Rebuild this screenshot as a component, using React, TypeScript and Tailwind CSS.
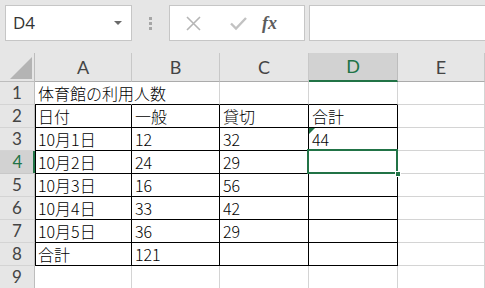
import React from "react";

const COLS = ["A", "B", "C", "D", "E"];

const DATA: string[][] = [
  ["体育館の利用人数", "", "", "", ""],
  ["日付", "一般", "貸切", "合計", ""],
  ["10月1日", "12", "32", "44", ""],
  ["10月2日", "24", "29", "", ""],
  ["10月3日", "16", "56", "", ""],
  ["10月4日", "33", "42", "", ""],
  ["10月5日", "36", "29", "", ""],
  ["合計", "121", "", "", ""],
  ["", "", "", "", ""],
];

const cellFont = { fontFamily: '"Noto Sans CJK JP", "Noto Sans", sans-serif' };
const uiFont = { fontFamily: 'Lato, "Open Sans", "Liberation Sans", sans-serif' };

const TopBar = () => (
  <div className="h-[53px] bg-[#e6e6e6] flex items-start pt-[5px] pl-[5px]">
    <div
      className="w-[127px] h-[36px] bg-white border border-[#c6c6c6] flex items-center justify-between pl-[7px] pr-[9px] text-[17px] text-[#333]"
      style={{ fontFamily: '"Open Sans", "Liberation Sans", sans-serif' }}
    >
      <span>D4</span>
      <span className="w-0 h-0 border-l-[4px] border-r-[4px] border-t-[4px] border-l-transparent border-r-transparent border-t-[#6a6a6a]" />
    </div>
    <div className="w-[37px] h-[36px] flex flex-col items-center justify-center gap-[2px]">
      <span className="w-[3px] h-[3px] bg-[#a6a6a6]" />
      <span className="w-[3px] h-[3px] bg-[#a6a6a6]" />
      <span className="w-[3px] h-[3px] bg-[#a6a6a6]" />
    </div>
    <div className="w-[136px] h-[36px] bg-white border border-[#c6c6c6] flex items-center">
      <svg width="44" height="34" viewBox="0 0 44 34" className="ml-[2px]">
        <path d="M15 11 L28 24 M28 11 L15 24" stroke="#b5b5b5" strokeWidth="1.6" fill="none" />
      </svg>
      <svg width="44" height="34" viewBox="0 0 44 34">
        <path d="M15 17.5 L20 22.5 L30 12" stroke="#c2c2c2" strokeWidth="2.4" fill="none" />
      </svg>
      <span
        className="ml-[2px] text-[18px] italic font-bold text-[#5c5c5c]"
        style={{ fontFamily: '"Liberation Serif", "DejaVu Serif", serif' }}
      >
        fx
      </span>
    </div>
    <div className="ml-[4px] flex-1 h-[36px] bg-white border border-r-0 border-[#c6c6c6]" />
  </div>
);

const Cell = ({ r, c, text }: { r: number; c: number; text: string }) => {
  const inTable = r >= 1 && r <= 7 && c <= 3;
  const bottomBlack = r <= 7 && c <= 3;
  const leftBlack = inTable && c === 0;
  let cls =
    "relative flex items-end pl-[3px] pb-[1px] text-[16px] leading-[20px] font-light text-black whitespace-nowrap border-r border-b ";
  cls += inTable ? "border-r-black " : r === 0 && c === 0 ? "border-r-transparent " : "border-r-[#d4d4d4] ";
  cls += bottomBlack ? "border-b-black " : "border-b-[#d4d4d4] ";
  if (leftBlack) cls += "shadow-[inset_1px_0_0_#000] ";
  if (r === 0 && c === 0) cls += "z-10 ";
  return (
    <div className={cls} style={cellFont}>
      {r === 2 && c === 3 && (
        <span className="absolute left-0 top-0 w-0 h-0 border-t-[6px] border-r-[6px] border-t-[#217346] border-r-transparent" />
      )}
      {r === 3 && c === 3 && (
        <>
          <span className="absolute left-[-2px] top-[-2px] right-[-1px] bottom-[-1px] border-2 border-[#217346] z-20" />
          <span className="absolute right-[-4px] bottom-[-4px] w-[6px] h-[6px] bg-[#217346] border border-white z-30" />
        </>
      )}
      <span>{text}</span>
    </div>
  );
};

export default function App() {
  return (
    <div className="w-[485px] h-[288px] overflow-hidden bg-white">
      <TopBar />
      <div className="grid grid-cols-[35px_97px_88px_89px_89px_1fr] grid-rows-[29px_repeat(9,23px)]">
        <div className="relative bg-[#e6e6e6] border-r border-b border-[#bdbdbd]">
          <svg width="35" height="29" className="absolute left-0 top-0">
            <polygon points="10,26 32,26 32,4" fill="#b4b4b4" />
          </svg>
        </div>
        {COLS.map((col, i) => (
          <div
            key={col}
            className={
              i === 3
                ? "flex items-center justify-center bg-[#d2d2d2] border-r border-r-[#bdbdbd] border-b-2 border-b-[#217346] text-[18px] text-[#217346]"
                : "flex items-center justify-center bg-[#e6e6e6] border-r border-b border-r-[#c8c8c8] border-b-[#ababab] text-[18px] text-[#444]"
            }
            style={uiFont}
          >
            {col}
          </div>
        ))}
        {DATA.map((row, r) => (
          <React.Fragment key={r}>
            <div
              className={
                r === 3
                  ? "flex items-center justify-center bg-[#d2d2d2] border-b border-b-[#c8c8c8] shadow-[inset_-2px_0_0_#217346] text-[17px] text-[#217346]"
                  : "flex items-center justify-center bg-[#e6e6e6] border-r border-b border-r-[#bdbdbd] border-b-[#d4d4d4] text-[17px] text-[#444]"
              }
              style={uiFont}
            >
              {r + 1}
            </div>
            {row.map((text, c) => (
              <Cell key={c} r={r} c={c} text={text} />
            ))}
          </React.Fragment>
        ))}
      </div>
    </div>
  );
}
